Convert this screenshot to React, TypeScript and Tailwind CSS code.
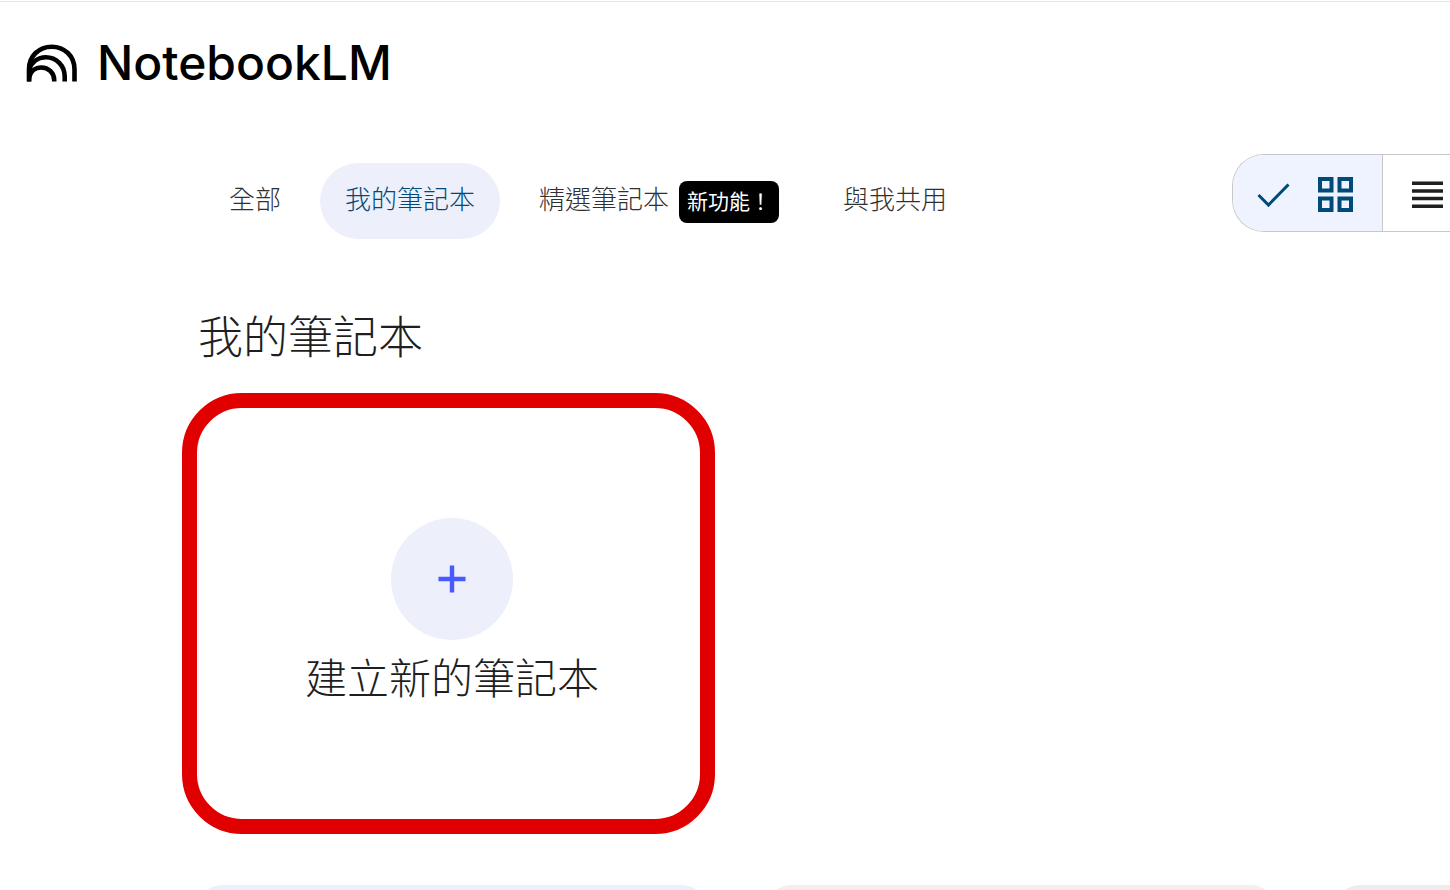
import React from "react";
import clsx from "clsx";

interface TabItem {
  label: string;
  badge?: string;
  selected?: boolean;
}

const tabs: TabItem[] = [
  { label: "全部" },
  { label: "我的筆記本", selected: true },
  { label: "精選筆記本", badge: "新功能！" },
  { label: "與我共用" },
];

const notebookColors = ["bg-[#edeffa]", "bg-[#f8edea]", "bg-[#f1ebf0]"];

const Logo = () => (
  <svg width="51" height="38" viewBox="0 0 51 38" fill="none" aria-hidden="true">
    <g stroke="#000" strokeWidth="4.6">
      <path d="M3 37.500V25.200C3 12 13 2.700 25.700 2.700S48.500 12 48.500 25.200V37.500" />
      <path d="M3 26C5.500 18 12 13.300 19.700 13.300C30.500 13.300 38.700 21.500 38.700 32.500V37.500" />
      <path d="M3 33.500C4.600 27.200 9.500 23.500 15.300 23.500C22.600 23.500 28.200 29.200 28.200 36V37.500" />
    </g>
    <path d="M1 25L6 21.500L5.300 37.500H1z" fill="#000" />
  </svg>
);

const Header = () => (
  <header className="mt-px flex items-center gap-5 border-t border-[#e3e5e5] px-[26px] pt-[29px]">
    <Logo />
    <div className="font-[Inter,sans-serif] text-[48px] font-medium leading-[64px] text-black">
      NotebookLM
    </div>
  </header>
);

const Tab = ({ label, badge, selected }: TabItem) => (
  <button
    type="button"
    role="tab"
    aria-selected={!!selected}
    className={clsx(
      "flex h-[76px] shrink-0 items-center rounded-full px-[25px] text-[26px] font-light",
      selected ? "bg-[#edeffa] text-[#004a77]" : "text-[#303030]"
    )}
  >
    <span className="pb-2">{label}</span>
    {badge && (
      <span className="ml-[10px] mt-0.5 flex h-[42px] items-center rounded-lg bg-black px-2 pb-0.5 text-[21px] font-normal text-white">
        {badge}
      </span>
    )}
  </button>
);

const ViewToggle = () => (
  <div className="flex h-[78px] shrink-0 overflow-hidden rounded-l-[32px] border border-r-0 border-[#c7c7c7]">
    <button
      type="button"
      aria-label="格狀檢視"
      aria-pressed="true"
      className="flex w-[150px] items-center gap-7 border-r border-[#c7c7c7] bg-[#eff3ff] pl-6 pt-1 text-[#004a77]"
    >
      <svg width="33" height="26" viewBox="0 0 33 26" fill="none" aria-hidden="true">
        <path d="M1.500 13L11.500 23L31.500 2.500" stroke="currentColor" strokeWidth="3" />
      </svg>
      <svg width="36" height="36" viewBox="0 0 36 36" fill="none" aria-hidden="true">
        <g stroke="currentColor" strokeWidth="4">
          <rect x="2" y="2" width="11.500" height="11.500" />
          <rect x="21.500" y="2" width="11.500" height="11.500" />
          <rect x="2" y="21.500" width="11.500" height="11.500" />
          <rect x="21.500" y="21.500" width="11.500" height="11.500" />
        </g>
      </svg>
    </button>
    <button
      type="button"
      aria-label="清單檢視"
      aria-pressed="false"
      className="flex w-[67px] items-center pl-[29px] pt-1 text-[#1f1f1f]"
    >
      <svg width="32" height="28" viewBox="0 0 32 28" aria-hidden="true">
        <path d="M0 0.500h31V4H0zM0 8.200h31v3.500H0zM0 15.800h31v3.500H0zM0 23.500h31V27H0z" fill="currentColor" />
      </svg>
    </button>
  </div>
);

const CreateCard = () => (
  <div className="relative w-[508px] shrink-0">
    <button
      type="button"
      className="flex h-[427px] w-full flex-col items-center rounded-3xl border border-[#edeffa] pt-[118px]"
    >
      <span className="flex size-[122px] items-center justify-center rounded-full bg-[#edeffa]">
        <svg width="28" height="28" viewBox="0 0 28 28" aria-hidden="true">
          <path d="M14 0.500v27M0.500 14h27" stroke="#4759ff" strokeWidth="4.400" />
        </svg>
      </span>
      <span className="mt-1.5 text-[42px] font-light leading-[60px] text-[#1f1f1f]">
        建立新的筆記本
      </span>
    </button>
    {/* Highlight frame over the card */}
    <div className="pointer-events-none absolute -bottom-2 -left-4 -right-[9px] -top-1.5 rounded-[60px] border-[15px] border-[#e10000]" />
  </div>
);

export default function App() {
  return (
    <div className="flow-root min-h-screen overflow-hidden bg-white font-['Noto_Sans_CJK_TC',sans-serif]">
      <Header />
      <main className="pt-[59px]">
        <div className="flex items-start pl-[204px]">
          <div role="tablist" className="flex flex-1 gap-[14px] pt-[9px]">
            {tabs.map((tab) => (
              <Tab key={tab.label} {...tab} />
            ))}
          </div>
          <ViewToggle />
        </div>

        <section className="pl-[198px] pt-16">
          <h1 className="text-[45px] font-light leading-[64px] text-[#1f1f1f]">
            我的筆記本
          </h1>
          <div className="mt-8 flex">
            <CreateCard />
          </div>
          <div className="mt-[59px] flex h-16 gap-[61px] overflow-hidden">
            {notebookColors.map((color) => (
              <div
                key={color}
                className={clsx("h-[427px] w-[508px] shrink-0 rounded-3xl", color)}
              />
            ))}
          </div>
        </section>
      </main>
    </div>
  );
}
